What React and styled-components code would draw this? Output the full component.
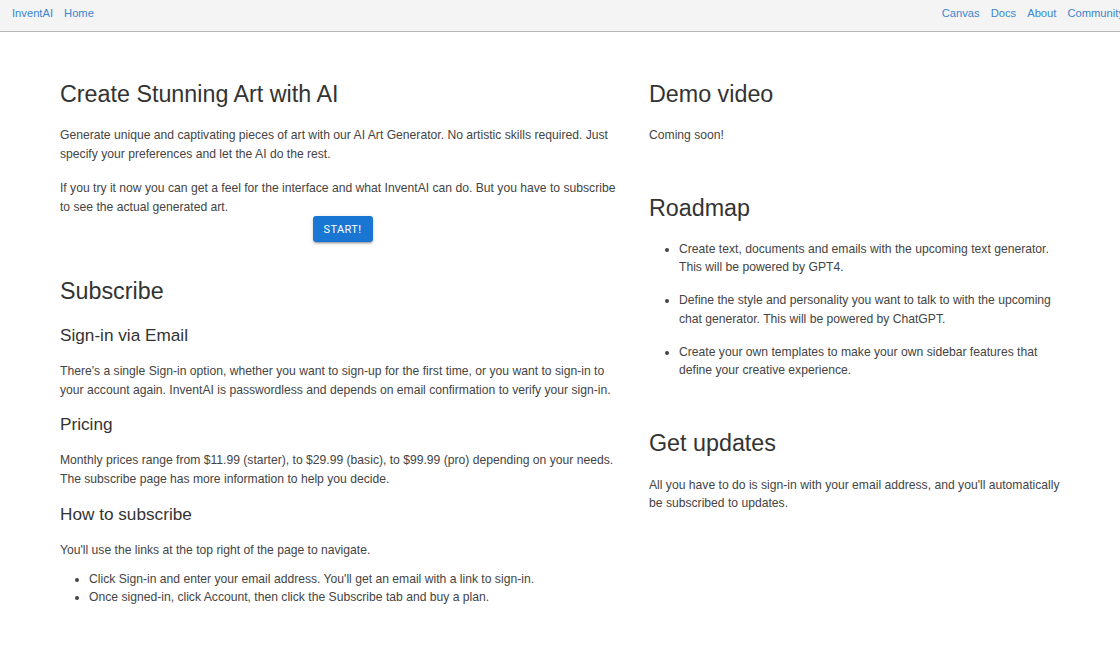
import React from "react";
import styled, { createGlobalStyle } from "styled-components";

const Global = createGlobalStyle`
  html, body { margin: 0; padding: 0; background: #fff; overflow-x: hidden; }
  body { font-family: "Liberation Sans", Arial, sans-serif; color: #444; }
  * { box-sizing: border-box; }
`;

const NavBar = styled.nav`
  display: flex;
  justify-content: space-between;
  align-items: flex-start;
  height: 32px;
  width: calc(100% + 16px);
  padding: 6px 12px 0;
  background: #f4f4f4;
  border-bottom: 1px solid #b8b8b8;
  font-family: "Liberation Sans", Arial, sans-serif;
  font-size: 11.2px;
  line-height: 14px;
`;

const NavGroup = styled.div`
  display: flex;
  gap: 11px;
  white-space: nowrap;
`;

const NavLink = styled.a`
  color: #3a86d0;
  text-decoration: none;
`;

const Main = styled.main`
  display: grid;
  grid-template-columns: 589px 420px;
  padding: 48px 0 40px 60px;
`;

const Column = styled.section`
  display: flex;
  flex-direction: column;
  padding-right: ${(p) => p.$pr || 0}px;
`;

const Title = styled.h1`
  margin: ${(p) => p.$mt || 0}px 0 0;
  font-size: 23.3px;
  line-height: 29px;
  font-weight: 400;
  color: #333;
`;

const SubTitle = styled.h3`
  margin: ${(p) => p.$mt || 0}px 0 0;
  font-size: 17.2px;
  line-height: 22px;
  font-weight: 400;
  color: #333;
`;

const Para = styled.p`
  margin: ${(p) => p.$mt || 16}px 0 0;
  font-size: 12.15px;
  line-height: 18.5px;
`;

const ButtonRow = styled.div`
  display: flex;
  justify-content: center;
`;

const StartButton = styled.button`
  height: 26px;
  padding: 0 11px;
  border: none;
  border-radius: 3px;
  background: #1976d2;
  color: #fff;
  font-family: Roboto, "Liberation Sans", sans-serif;
  font-size: 11px;
  font-weight: 400;
  letter-spacing: 0.4px;
  text-transform: uppercase;
  box-shadow: 0 3px 1px -2px rgba(0,0,0,0.2), 0 2px 2px 0 rgba(0,0,0,0.14), 0 1px 5px 0 rgba(0,0,0,0.12);
  cursor: pointer;
`;

const List = styled.ul`
  margin: ${(p) => p.$mt || 10}px 0 0;
  padding-left: ${(p) => p.$pl || 29}px;
  font-size: 12.15px;
  line-height: ${(p) => p.$lh || 18}px;
`;

const Item = styled.li`
  margin-top: ${(p) => p.$gap || 0}px;
  &:first-child { margin-top: 0; }
`;

export default function App() {
  return (
    <>
      <Global />
      <NavBar>
        <NavGroup>
          <NavLink href="#">InventAI</NavLink>
          <NavLink href="#">Home</NavLink>
        </NavGroup>
        <NavGroup>
          <NavLink href="#">Canvas</NavLink>
          <NavLink href="#">Docs</NavLink>
          <NavLink href="#">About</NavLink>
          <NavLink href="#">Community</NavLink>
        </NavGroup>
      </NavBar>
      <Main>
        <Column $pr={24}>
          <Title>Create Stunning Art with AI</Title>
          <Para $mt={17}>
            Generate unique and captivating pieces of art with our AI Art Generator. No artistic skills required. Just
            specify your preferences and let the AI do the rest.
          </Para>
          <Para $mt={16}>
            If you try it now you can get a feel for the interface and what InventAI can do. But you have to subscribe
            to see the actual generated art.
          </Para>
          <ButtonRow>
            <StartButton>Start!</StartButton>
          </ButtonRow>
          <Title $mt={35}>Subscribe</Title>
          <SubTitle $mt={18}>Sign-in via Email</SubTitle>
          <Para $mt={16}>
            There's a single Sign-in option, whether you want to sign-up for the first time, or you want to sign-in to
            your account again. InventAI is passwordless and depends on email confirmation to verify your sign-in.
          </Para>
          <SubTitle $mt={14}>Pricing</SubTitle>
          <Para $mt={16}>
            Monthly prices range from $11.99 (starter), to $29.99 (basic), to $99.99 (pro) depending on your needs.
            The subscribe page has more information to help you decide.
          </Para>
          <SubTitle $mt={15}>How to subscribe</SubTitle>
          <Para $mt={16}>You'll use the links at the top right of the page to navigate.</Para>
          <List $mt={10}>
            <Item>Click Sign-in and enter your email address. You'll get an email with a link to sign-in.</Item>
            <Item>Once signed-in, click Account, then click the Subscribe tab and buy a plan.</Item>
          </List>
        </Column>
        <Column>
          <Title>Demo video</Title>
          <Para $mt={17}>Coming soon!</Para>
          <Title $mt={49}>Roadmap</Title>
          <List $mt={17} $pl={30} $lh={18.5}>
            <Item>Create text, documents and emails with the upcoming text generator. This will be powered by GPT4.</Item>
            <Item $gap={14.5}>Define the style and personality you want to talk to with the upcoming chat generator. This will be powered by ChatGPT.</Item>
            <Item $gap={14.5}>Create your own templates to make your own sidebar features that define your creative experience.</Item>
          </List>
          <Title $mt={49}>Get updates</Title>
          <Para $mt={18}>
            All you have to do is sign-in with your email address, and you'll automatically be subscribed to updates.
          </Para>
        </Column>
      </Main>
    </>
  );
}
